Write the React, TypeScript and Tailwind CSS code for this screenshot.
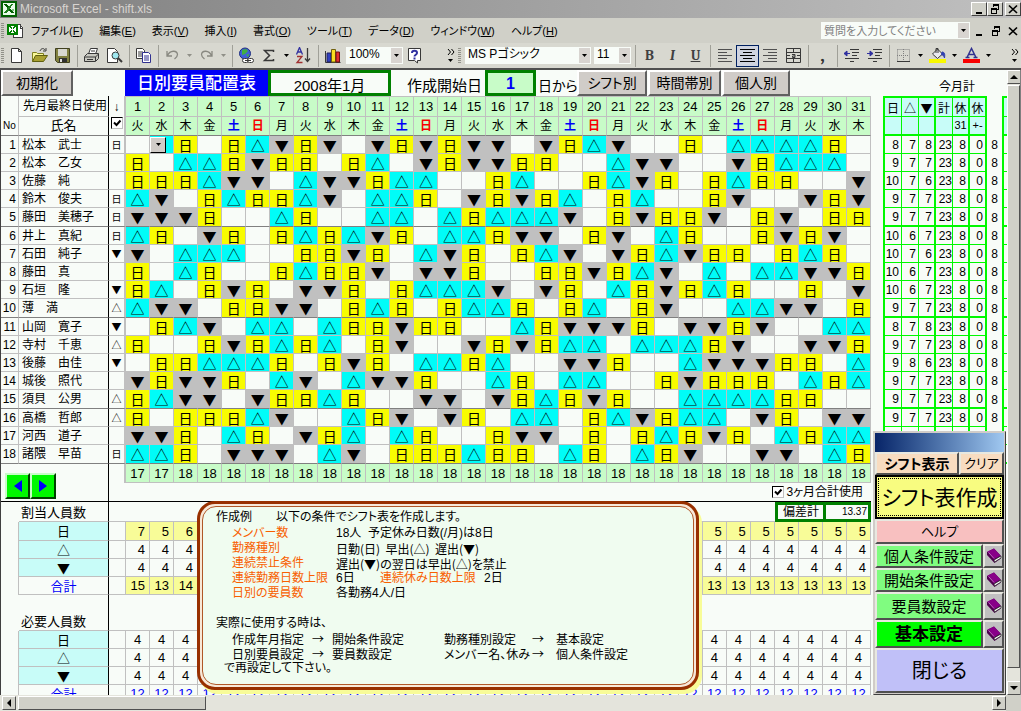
import type { ReactNode } from 'react';

// D = 日勤, U = 早出 (△), L = 遅出 (▼), . = 休み
const members = [
  { name: '松本　武士', prev: 'D', days: '.UD.DULDL.LDLDLL.LDUL..D.UUUUD.', sum: [8, 7, 8] },
  { name: '松本　乙女', prev: '.', days: 'D.UUDLDD.DU.LDLLDD..ULL..LDUUU.', sum: [9, 7, 7] },
  { name: '佐藤　純', prev: '.', days: 'DDDULL.ULLDUU..DU..DULD.DUDD..L', sum: [10, 7, 6] },
  { name: '鈴木　俊夫', prev: 'D', days: 'UL.DUDDUL.UUD.LDLDU.DU..DL..LDL', sum: [9, 7, 7] },
  { name: '藤田　美穂子', prev: 'D', days: 'LLLD..UD..UU.UDUUUL.DLDDL.DL.DD', sum: [9, 7, 7] },
  { name: '井上　真紀', prev: 'D', days: 'UD.LD.DUDULD.UUDLL.DL.UD..DLDL.', sum: [10, 6, 7] },
  { name: '石田　純子', prev: 'L', days: 'L.UUU..DDLD.ULD.DUL.LDULDD.DUD.', sum: [10, 7, 6] },
  { name: '藤田　真', prev: '.', days: 'D.UD..DUDDL.LLD..DDLDUL.U.UULLD', sum: [10, 6, 7] },
  { name: '石垣　隆', prev: 'L', days: 'DU.DLD.LLD.DUUUL.LD.UDLDUD..D.L', sum: [10, 6, 7] },
  { name: '薄　満', prev: 'U', days: 'ULL.DDLL.DUD.DUUD.DU.DL..UULL.D', sum: [9, 7, 7] },
  { name: '山岡　寛子', prev: 'L', days: '.DUL.UU.UDDLDD..UDLLLD.LLDL..UU', sum: [8, 7, 8] },
  { name: '寺村　千恵', prev: 'U', days: 'D..DLDUDU.DL..LDLDUU.UUUDL..LLD', sum: [9, 7, 7] },
  { name: '後藤　由佳', prev: 'L', days: '.DDUUUD.DLD.UUDU..LLD..ULLLDD.U', sum: [9, 8, 6] },
  { name: '城後　照代', prev: '.', days: 'LDLLD.UL.ULLD..UD.UU..DLDDD.UDU', sum: [9, 7, 7] },
  { name: '須貝　公男', prev: 'U', days: 'DULL.LDDUD..LL.LDUDLD..UUUUDD..', sum: [9, 7, 7] },
  { name: '高橋　哲郎', prev: 'U', days: 'D.DDDUL..UDL.LD.UU.DULDUU.LD.LL', sum: [9, 7, 7] },
  { name: '河西　道子', prev: '.', days: 'LLD.UD.LDU.UD..DLL.D.DUDLD.UDUU', sum: null },
  { name: '諸隈　早苗', prev: 'D', days: 'UUD.LLL.UL.DDDUDD.UD.UDL..LL.UD', sum: null },
];

const days = Array.from({ length: 31 }, (_, i) => i + 1);
const week = ['月', '火', '水', '木', '金', '土', '日'];
const marks: Record<string, string> = { D: '日', U: '△', L: '▼', '.': '' };
const fills: Record<string, string> = {
  D: 'bg-[#f8fc00]',
  U: 'bg-[#00fcf8]',
  L: 'bg-[#c0c0c0]',
  '.': 'bg-[#f8fcf8]',
};

const assigned = [
  { label: '日', head: [7, 5, 6], rest: 5, fill: 'bg-[#f8fc98]' },
  { label: '△', head: [4, 4, 4], rest: 4, fill: '' },
  { label: '▼', head: [4, 4, 4], rest: 4, fill: '' },
  { label: '合計', head: [15, 13, 14], rest: 13, fill: 'bg-[#f8fc98]' },
];
const required = [
  { label: '日', value: 4 },
  { label: '△', value: 4 },
  { label: '▼', value: 4 },
  { label: '合計', value: 12 },
];

const weekday = (d: number) => week[d % 7];
const weekColor = (w: string) =>
  w === '土' ? 'font-bold text-[#0000f8]' : w === '日' ? 'font-bold text-[#f80000]' : '';
// every fifth member closes a block with a darker rule
const isBlockEnd = (i: number) => i % 5 === 4 || i === members.length - 1;

const raised = 'border-2 border-t-white border-l-white border-r-[#606060] border-b-[#606060]';
// full-width △ and ▼
const markFont = "font-['Noto_Sans_CJK_JP',sans-serif]";

const Caret = ({ color = '#000' }: { color?: string }) => (
  <svg width="5" height="3" viewBox="0 0 5 3" className="shrink-0">
    <path d="M0 0h5L2.5 3z" fill={color} />
  </svg>
);

const MinIcon = () => (
  <svg width="10" height="10" viewBox="0 0 10 10" shapeRendering="crispEdges">
    <path d="M2 8h6v2H2z" />
  </svg>
);
const RestoreIcon = () => (
  <svg width="10" height="10" viewBox="0 0 10 10" shapeRendering="crispEdges">
    <path d="M3 0h6v6H7V5h1V2H4v1H3zM1 4h6v6H1zm1 2v3h4V6z" fillRule="evenodd" />
  </svg>
);
const CloseIcon = () => (
  <svg width="10" height="10" viewBox="0 0 10 10">
    <path d="M1 1.500l8 7.500M9 1.500l-8 7.500" stroke="#000" strokeWidth="1.700" />
  </svg>
);

const ExcelIcon = ({ size = 16 }: { size?: number }) => (
  <svg width={size} height={size} viewBox="0 0 16 16" shapeRendering="crispEdges">
    <path d="M0 0h16v16H0z" fill="#006000" />
    <path d="M2 2h12v12H2z" fill="#e8fce8" />
    <path d="M3 3h3l7 9h-3z" fill="#006000" />
    <path d="M12 3h-2l-7 9h3z" fill="#208020" />
    <path d="M11 8h2v2h-2z" fill="#80c080" />
  </svg>
);

const WorkbookIcon = () => (
  <svg width="17" height="16" viewBox="0 0 17 16" shapeRendering="crispEdges">
    <path d="M6.500 1.500h6l3 3v10h-9z" fill="#fff" stroke="#404040" />
    <path d="M13 1v4h3" fill="none" stroke="#404040" />
    <path d="M0 1h11v11H0z" fill="#008000" />
    <path d="M2 3h7v7H2z" fill="#fff" />
    <path d="M2 3h2l5 7H7zM9 3H7l-5 7h2z" fill="#008000" />
  </svg>
);

const Ico = ({ children }: { children: ReactNode }) => (
  <svg width="17" height="17" viewBox="0 0 17 17" fill="none" stroke="#383838">
    {children}
  </svg>
);

const NewIcon = () => <Ico><path d="M3.500 1.500h7l3 3v11h-10zM10.500 1.500v3h3" fill="#fff" /></Ico>;
const OpenIcon = () => (
  <Ico>
    <path d="M1.500 14.500v-9h4l1 1h6v2" fill="#f8f898" stroke="#808020" />
    <path d="M1.500 14.500l3-6h12l-4 6z" fill="#a8a030" stroke="#606010" />
    <path d="M9 4c1-3 4-3 5-1m1-2v3h-3" />
  </Ico>
);
const SaveIcon = () => (
  <Ico>
    <path d="M1.500 1.500h14v14h-12l-2-2z" fill="#808040" stroke="#404020" />
    <path d="M4 2h9v7H4z" fill="#d8d8d0" stroke="none" />
    <path d="M5 11h8v4H5z" fill="#303030" stroke="none" />
    <path d="M6 12h2v3H6z" fill="#e0e0e0" stroke="none" />
  </Ico>
);
const PrintIcon = () => (
  <Ico>
    <path d="M5.500 7l2-5.500h7L12.500 7z" fill="#fff" />
    <path d="M1.500 9.500l3-3h11v5l-3 3h-11z" fill="#c8c8c0" />
    <path d="M2 10h10.500v4M12.500 10l3-3M4 12.500h6M8 4h4" />
  </Ico>
);
const PreviewIcon = () => (
  <Ico>
    <path d="M1.500 1.500h7l3 3v11h-10z" fill="#fff" />
    <circle cx="9.500" cy="8.500" r="3.500" fill="#a0e8f0" />
    <path d="M12 11l4 4" strokeWidth="2" />
  </Ico>
);
const CopyIcon = () => (
  <Ico>
    <path d="M1.500 1.500h6l2 2v8h-8z" fill="#fff" />
    <path d="M3 5h5M3 7h5M3 9h5" />
    <path d="M7.500 5.500h6l2 2v8h-8z" fill="#fff" stroke="#303090" />
    <path d="M9 9h5M9 11h5M9 13h5" stroke="#303090" />
  </Ico>
);
const UndoIcon = () => <Ico><path d="M3 4v5h5M3.500 8.500C6 3 13 3 13.500 7.500c0 2-1 3-3 4.500" stroke="#888880" strokeWidth="1.300" /></Ico>;
const RedoIcon = () => <Ico><path d="M14 4v5H9M13.500 8.500C11 3 4 3 3.500 7.500c0 2 1 3 3 4.500" stroke="#888880" strokeWidth="1.300" /></Ico>;
const LinkIcon = () => (
  <Ico>
    <circle cx="7" cy="6.500" r="5.500" fill="#4060d8" stroke="#203080" />
    <path d="M4 3l4-1 2 2-3 3-3 1zM8 8l3-1-1 3z" fill="#40b040" stroke="none" />
    <rect x="4.500" y="11.500" width="6" height="4" rx="2" fill="#fff" />
    <rect x="9.500" y="11.500" width="6" height="4" rx="2" fill="#fff" />
    <path d="M7 13.500h6" />
  </Ico>
);
const SigmaIcon = () => <Ico><path d="M12.500 5V3.500h-9l5 5-5 5h9V12" strokeWidth="1.500" /></Ico>;
const SortIcon = () => (
  <Ico>
    <path d="M1.500 7.500l3-7 3 7M2.500 5h4" stroke="#3030a0" strokeWidth="1.300" />
    <path d="M2 9.500h5l-5 6h5.500" stroke="#a03030" strokeWidth="1.300" />
    <path d="M12.500 1v13M10 11.500l2.500 3 2.500-3" strokeWidth="1.300" />
  </Ico>
);
const ChartIcon = () => (
  <Ico>
    <path d="M1.500 4v11.500h15" />
    <path d="M3 6h4v9H3z" fill="#3040c0" stroke="#202060" />
    <path d="M7.500 2.500h4V15h-4z" fill="#f8e020" stroke="#706010" />
    <path d="M12 5h3.500v10H12z" fill="#e03030" stroke="#701010" />
  </Ico>
);
const HelpIcon = () => (
  <Ico>
    <path d="M2.500 1.500h12v12h-3v2.500l-3-2.500h-6z" fill="#fff" />
    <path d="M6 6c0-3 5-3 5 0 0 1.500-2.500 2-2.500 3.500M8.500 10.500v2" stroke="#3030a0" strokeWidth="2" />
  </Ico>
);
const LinesIcon = ({ d, color = '#505050' }: { d: string; color?: string }) => (
  <Ico><path d={d} stroke={color} /></Ico>
);
const MergeIcon = () => (
  <Ico>
    <path d="M1.500 1.500h14v14h-14zM1 5.500h15M1 11.500h15M8.500 1v4M8.500 12v4" />
    <path d="M2 8.500h3M12 8.500h3M7 7.500h3v3H7.500V9H10" />
  </Ico>
);
const IndentIcon = ({ arrow }: { arrow: string }) => (
  <Ico>
    <path d="M7 2.500h9M9 5.500h7M9 8.500h5M2 11.500h14M7 14.500h4" />
    <path d={arrow} fill="#3030a0" stroke="#3030a0" />
  </Ico>
);
const BordersIcon = () => (
  <Ico>
    <path d="M2.500 2.500h12v12M2.500 2.500v12M8.500 2v12M2 8.500h12" strokeDasharray="1 1" stroke="#808080" />
    <path d="M2 14.500h13" />
  </Ico>
);
const FillIcon = () => (
  <Ico>
    <path d="M3.500 7l5-5 5 5-5 4.500z" fill="#e8e8f0" />
    <path d="M7 6V1.500h2V6" />
    <path d="M13 5c3 0 3 3 2.500 6-1-3-2-3-3-3z" fill="#3040b0" stroke="#3040b0" />
    <path d="M0 12h17v4H0z" fill="#f8f800" stroke="none" />
  </Ico>
);
const FontColorIcon = () => (
  <Ico>
    <path d="M4 10.500l4.500-9 4.500 9M6 7.500h5M2.500 10.500h4M10.500 10.500h4" stroke="#303090" strokeWidth="1.500" />
    <path d="M0 12h17v4H0z" fill="#f80000" stroke="none" />
  </Ico>
);
const BookIcon = () => (
  <svg width="16" height="16" viewBox="0 0 16 16">
    <path d="M1 4l7-3.500 7 7.500v2.500L8.500 15 1 7z" fill="#500050" />
    <path d="M1.500 3.500L8 .5l6.500 7L8 11z" fill="#880088" />
    <path d="M8 12l7-4v2l-6.500 4z" fill="#fff" stroke="#202020" strokeWidth=".7" />
    <path d="M2.500 4.500l5.500 6" stroke="#d080d0" strokeWidth=".8" />
  </svg>
);

const Tool = ({ label, children }: { label: string; children: ReactNode }) => (
  <button type="button" aria-label={label} className="flex h-[22px] w-[23px] shrink-0 items-center justify-center">
    {children}
  </button>
);
const Drop = ({ label, color }: { label: string; color?: string }) => (
  <button type="button" aria-label={label} className="flex h-[22px] w-[11px] shrink-0 items-center justify-center">
    <Caret color={color} />
  </button>
);
const Sep = () => (
  <div className="flex w-[6px] shrink-0 justify-center">
    <div className="h-[22px] w-px bg-[#a0a098]" />
  </div>
);
const Grip = () => (
  <div className="flex w-[5px] shrink-0 flex-col items-center gap-px">
    {[0, 1, 2, 3, 4, 5, 6, 7].map(i => <div key={i} className="h-px w-[3px] bg-[#909088]" />)}
  </div>
);
const More = () => (
  <button type="button" aria-label="ツールバー オプション" className="flex w-[13px] shrink-0 flex-col items-center gap-1">
    <svg width="8" height="6" viewBox="0 0 8 6"><path d="M1 0l2.500 3L1 6M4.500 0L7 3 4.500 6" fill="none" stroke="#000" /></svg>
    <Caret />
  </button>
);

const Combo = ({ label, value, className }: { label: string; value: string; className: string }) => (
  <div className={`relative h-[17px] shrink-0 bg-[#f8fcf8] ${className}`}>
    <select aria-label={label} className="block h-[15px] w-full appearance-none pl-[3px] text-[12px] leading-[15px] outline-none">
      <option>{value}</option>
    </select>
    <span className="pointer-events-none absolute inset-y-px right-px flex w-[11px] items-center justify-center bg-[#d8d4d0]">
      <Caret />
    </span>
  </div>
);

const Check = ({ id, label }: { id: string; label?: string }) => (
  <span className="relative inline-block h-[12px] w-[12px]">
    <input
      id={id}
      type="checkbox"
      defaultChecked
      aria-label={label}
      className="block h-[12px] w-[12px] appearance-none border border-r-[#c0c0c0] border-b-[#c0c0c0] border-t-black border-l-black bg-white"
    />
    <svg width="12" height="12" viewBox="0 0 12 12" className="pointer-events-none absolute inset-0">
      <path d="M3 5.500l2.500 2.500L9.500 3.500" fill="none" stroke="#000" strokeWidth="2" />
    </svg>
  </span>
);

const menus = [
  ['ファイル', 'F'], ['編集', 'E'], ['表示', 'V'], ['挿入', 'I'], ['書式', 'O'],
  ['ツール', 'T'], ['データ', 'D'], ['ウィンドウ', 'W'], ['ヘルプ', 'H'],
];

const titleButton =
  'flex h-[14px] w-[16px] items-center justify-center border border-t-white border-l-white border-r-[#404040] border-b-[#404040] bg-[#d0d0c8]';

const TitleBar = () => (
  <header className="flex h-[18px] shrink-0 items-center bg-linear-to-r from-[#808080] to-[#c0c0c0] pl-px">
    <ExcelIcon />
    <h1 className="ml-[3px] flex-1 text-[12px] leading-[18px] text-[#d8d4d0]">Microsoft Excel - shift.xls</h1>
    <div className="flex">
      <button type="button" aria-label="最小化" className={titleButton}><MinIcon /></button>
      <button type="button" aria-label="元に戻す" className={titleButton}><RestoreIcon /></button>
      <button type="button" aria-label="閉じる" className={`ml-[2px] ${titleButton}`}><CloseIcon /></button>
    </div>
  </header>
);

const MenuBar = () => (
  <nav className="flex h-[25px] shrink-0 items-center bg-[#d0d0c8]">
    <Grip />
    <span className="ml-[2px]"><WorkbookIcon /></span>
    <div className="ml-[7px] flex flex-1 gap-4 text-[11px] leading-[16px]">
      {menus.map(([text, key]) => (
        <button type="button" key={key} className="whitespace-nowrap">
          {text}(<u>{key}</u>)
        </button>
      ))}
    </div>
    <div className="flex h-[17px] w-[149px] items-center bg-[#f8fcf8]">
      <input aria-label="質問" placeholder="質問を入力してください" className="h-full min-w-0 flex-1 pl-[3px] text-[11px] outline-none placeholder:text-[#808080]" />
      <button type="button" aria-label="質問の一覧" className="mr-px flex h-[15px] w-[11px] items-center justify-center bg-[#d8d4d0]"><Caret /></button>
    </div>
    <div className="flex w-[51px] justify-between pr-[3px] pl-[4px]">
      <button type="button" aria-label="ブックを最小化"><MinIcon /></button>
      <button type="button" aria-label="ブックを元に戻す"><RestoreIcon /></button>
      <button type="button" aria-label="ブックを閉じる"><CloseIcon /></button>
    </div>
  </nav>
);

const Toolbar = () => (
  <div className="flex h-[25px] shrink-0 items-center bg-[#d8d8d0]">
    <div className="flex w-[457px] shrink-0 items-center">
      <Grip />
      <Tool label="新規作成"><NewIcon /></Tool>
      <Tool label="開く"><OpenIcon /></Tool>
      <Tool label="上書き保存"><SaveIcon /></Tool>
      <Sep />
      <Tool label="印刷"><PrintIcon /></Tool>
      <Tool label="印刷プレビュー"><PreviewIcon /></Tool>
      <Sep />
      <Tool label="コピー"><CopyIcon /></Tool>
      <Sep />
      <Tool label="元に戻す"><UndoIcon /></Tool>
      <Drop label="元に戻す履歴" color="#909088" />
      <Tool label="やり直し"><RedoIcon /></Tool>
      <Drop label="やり直し履歴" color="#909088" />
      <Sep />
      <Tool label="ハイパーリンク"><LinkIcon /></Tool>
      <Tool label="オートSUM"><SigmaIcon /></Tool>
      <Drop label="関数" />
      <Tool label="並べ替え"><SortIcon /></Tool>
      <Sep />
      <Tool label="グラフ"><ChartIcon /></Tool>
      <Combo label="ズーム" value="100%" className="ml-[2px] w-[57px]" />
      <Tool label="ヘルプ"><HelpIcon /></Tool>
      <div className="flex-1" />
      <More />
    </div>
    <div className="flex flex-1 items-center">
      <Grip />
      <Combo label="フォント" value="MS Pゴシック" className="ml-[3px] w-[126px]" />
      <Combo label="フォント サイズ" value="11" className="ml-[3px] mr-px w-[37px]" />
      <Sep />
      <Tool label="太字"><b className="font-serif text-[14px] text-[#404040]">B</b></Tool>
      <Tool label="斜体"><i className="font-serif text-[14px] font-bold text-[#404040]">I</i></Tool>
      <Tool label="下線"><u className="font-serif text-[14px] font-bold text-[#404040]">U</u></Tool>
      <Sep />
      <Tool label="左揃え"><LinesIcon d="M2 2.500h14M2 5.500h9M2 8.500h14M2 11.500h9M2 14.500h14" /></Tool>
      <span className="border border-[#002060] bg-[#d0d4e0]">
        <button type="button" aria-label="中央揃え" className="flex h-[20px] w-[21px] items-center justify-center">
          <LinesIcon d="M1 2.500h15M4 5.500h9M1 8.500h15M4 11.500h9M1 14.500h15" color="#000" />
        </button>
      </span>
      <Tool label="右揃え"><LinesIcon d="M1 2.500h14M6 5.500h9M1 8.500h14M6 11.500h9M1 14.500h14" /></Tool>
      <Tool label="セルを結合して中央揃え"><MergeIcon /></Tool>
      <Sep />
      <Tool label="桁区切り"><b className="font-serif text-[20px] leading-[12px] text-[#303030]">,</b></Tool>
      <Sep />
      <Tool label="インデント解除"><IndentIcon arrow="M1 6.500h6M4 4v5l-3-2.500z" /></Tool>
      <Tool label="インデント"><IndentIcon arrow="M1 6.500h6M4 4v5l3-2.500z" /></Tool>
      <Sep />
      <Tool label="罫線"><BordersIcon /></Tool>
      <Drop label="罫線の種類" />
      <Tool label="塗りつぶし"><FillIcon /></Tool>
      <Drop label="塗りつぶしの色" />
      <Tool label="フォントの色"><FontColorIcon /></Tool>
      <Drop label="フォントの色の一覧" />
      <div className="flex-1" />
      <More />
    </div>
  </div>
);

const SheetButton = ({ children, className }: { children: ReactNode; className: string }) => (
  <button type="button" className={`h-[26px] shrink-0 bg-[#d0ccc8] text-[14px] leading-[22px] whitespace-nowrap ${raised} ${className}`}>{children}</button>
);

const SheetHead = () => (
  <div className="flex h-[26px]">
    <SheetButton className="w-[72px]">初期化</SheetButton>
    <h2 className="ml-[52px] w-[143px] bg-[#0000f8] text-center text-[17px] leading-[27px] font-medium text-white">日別要員配置表</h2>
    <div className="w-[123px] border-[3px] border-[#008000] text-center text-[15px] leading-[26px]">2008年1月</div>
    <div className="w-[94px] pr-[3px] text-right text-[15px] leading-[32px]">作成開始日</div>
    <div className="w-[51px] border-[3px] border-[#008000] bg-[#c8fcc8] text-center text-[16px] leading-[22px] font-bold text-[#0000f8]">1</div>
    <div className="w-[41px] pl-[2px] text-[14px] leading-[32px] whitespace-nowrap">日から</div>
    <SheetButton className="w-[70px]">シフト別</SheetButton>
    <SheetButton className="ml-px w-[73px]">時間帯別</SheetButton>
    <SheetButton className="ml-px w-[68px]">個人別</SheetButton>
  </div>
);

const ScheduleTable = () => (
  <table className="w-full table-fixed border-separate border-spacing-0 text-[13px] leading-[16px]">
    <colgroup>
      <col className="w-[18px]" />
      <col className="w-[90px]" />
      <col className="w-[17px]" />
      {days.map(d => <col key={d} />)}
    </colgroup>
    <thead>
      <tr className="h-[21px]">
        <th rowSpan={2} className="border-r border-b border-r-[#c0c0c0] border-b-[#808080] p-0 pb-px align-bottom text-[10px] font-normal">No</th>
        <th className="border-r border-b border-r-black border-b-[#c0c0c0] p-0 pr-px text-right text-[12px] font-normal whitespace-nowrap">先月最終日使用</th>
        <th className="border-r-2 border-[#c0c0c0] p-0 text-[12px] font-normal">↓</th>
        {days.map(d => (
          <th key={d} className="border-t border-r border-b border-[#c0c0c0] bg-[#c8fcc8] p-0 pt-px font-normal">{d}</th>
        ))}
      </tr>
      <tr className="h-[19px]">
        <th className="border-r border-b border-r-black border-b-[#808080] p-0 text-[13px] font-normal">氏名</th>
        <th className="border-r-2 border-b border-r-[#c0c0c0] border-b-[#808080] p-0 align-top leading-[12px]">
          <Check id="use-prev" label="先月最終日使用" />
        </th>
        {days.map(d => (
          <th key={d} className={`border-r border-b border-r-[#c0c0c0] border-b-[#808080] bg-[#c8fcc8] p-0 text-[12px] ${weekColor(weekday(d)) || 'font-normal'}`}>
            {weekday(d)}
          </th>
        ))}
      </tr>
    </thead>
    <tbody>
      {members.map((m, i) => {
        const line = isBlockEnd(i) ? 'border-b-[#808080]' : 'border-b-[#c0c0c0]';
        return (
          <tr key={m.name} className={isBlockEnd(i) ? 'h-[19px]' : 'h-[18px]'}>
            <td className={`border-r border-b border-r-[#c0c0c0] p-0 pr-[2px] text-right text-[12px] ${line}`}>{i + 1}</td>
            <td className={`border-r border-b border-r-black p-0 pl-[3px] text-[12px] whitespace-nowrap ${line}`}>{m.name}</td>
            <td className={`border-r-2 border-b border-r-[#c0c0c0] p-0 text-center text-[10px] ${markFont} ${line}`}>{marks[m.prev]}</td>
            {m.days.split('').map((s, d) => (
              <td key={d} className={`border-r border-b border-r-[#c0c0c0] p-0 text-center text-[14px] ${markFont} ${line} ${fills[s]}`}>
                {i === 0 && d === 1 ? (
                  <button type="button" aria-label="シフトを選択" className="flex h-[16px] w-[16px] items-center justify-center border border-t-white border-l-white border-r-black border-b-black bg-[#d0ccc8]">
                    <Caret />
                  </button>
                ) : marks[s]}
              </td>
            ))}
          </tr>
        );
      })}
      <tr className="h-[19px]">
        <td colSpan={2} rowSpan={2} className="border-r border-b border-black p-0 pt-[9px] pl-[4px] align-top">
          <div className="flex">
            <button type="button" aria-label="前月" className="flex h-[26px] w-[25px] items-center justify-center border-2 border-t-[#c8fcc8] border-l-[#c8fcc8] border-r-[#004000] border-b-[#004000] bg-[#00f800]">
              <svg width="8" height="12" viewBox="0 0 8 12"><path d="M8 0v12L0 6z" fill="#0000f8" /></svg>
            </button>
            <button type="button" aria-label="翌月" className="flex h-[26px] w-[26px] items-center justify-center border-2 border-t-[#c8fcc8] border-l-[#c8fcc8] border-r-[#004000] border-b-[#004000] bg-[#00f800]">
              <svg width="8" height="12" viewBox="0 0 8 12"><path d="M0 0v12l8-6z" fill="#0000f8" /></svg>
            </button>
          </div>
        </td>
        <td className="border-r-2 border-[#c0c0c0] p-0" />
        {days.map(d => (
          <td key={d} className="border-r border-b border-[#c0c0c0] bg-[#c8fcc8] p-0 pt-[2px] text-center">{d < 3 ? 17 : 18}</td>
        ))}
      </tr>
      <tr className="h-[19px]">
        <td colSpan={32} className="border-b border-black p-0">
          <div className="flex h-[18px] items-center justify-end gap-[3px] pr-[8px] text-[12px]">
            <Check id="three-months" />
            <label htmlFor="three-months">3ヶ月合計使用</label>
          </div>
        </td>
      </tr>
      <tr className="h-[20px]">
        <td className="p-0" />
        <td className="border-r border-b border-r-black border-b-[#c0c0c0] p-0 pt-[3px] pl-[2px]">割当人員数</td>
        <td colSpan={28} className="border-b border-[#c0c0c0] p-0" />
        <td colSpan={2} className="border-[3px] border-r-0 border-[#008000] p-0 pr-[4px] text-right text-[12px] leading-[14px] whitespace-nowrap">偏差計</td>
        <td colSpan={2} className="border-[3px] border-[#008000] p-0 pr-px text-right text-[10px] leading-[14px]">13.37</td>
      </tr>
      {assigned.map((row, i) => (
        <tr key={row.label} className={i === 0 ? 'h-[19px]' : 'h-[18px]'}>
          <td className="border-r border-[#c0c0c0] p-0" />
          <td className={`border-r border-b border-r-black border-b-[#c0c0c0] p-0 text-center text-[13px] ${markFont} ${i === 3 ? 'text-[#0000f8]' : 'bg-[#c8fcf8]'}`}>{row.label}</td>
          <td className="border-r border-b border-[#c0c0c0] p-0" />
          {days.map((d, n) => (
            <td key={d} className={`border-r border-b border-[#c0c0c0] p-0 pt-px pr-[4px] text-right ${row.fill}`}>{row.head[n] ?? row.rest}</td>
          ))}
        </tr>
      ))}
      <tr className="h-[36px]">
        <td className="p-0" />
        <td className="border-r border-b border-r-black border-b-[#c0c0c0] p-0 pl-[2px] align-bottom">必要人員数</td>
        <td colSpan={32} className="border-b border-[#c0c0c0] p-0" />
      </tr>
      {required.map((row, i) => (
        <tr key={row.label} className="h-[18px]">
          <td className="border-r border-[#c0c0c0] p-0" />
          <td className={`border-r border-b border-r-black border-b-[#c0c0c0] p-0 text-center text-[13px] ${markFont} ${i === 3 ? 'text-[#0000f8]' : 'bg-[#c8fcf8]'}`}>{row.label}</td>
          <td className="border-r border-b border-[#c0c0c0] p-0" />
          {days.map(d => (
            <td key={d} className={`border-r border-b border-[#c0c0c0] p-0 pt-px text-center ${i === 3 ? 'text-[#0000f8]' : ''}`}>{row.value}</td>
          ))}
        </tr>
      ))}
    </tbody>
  </table>
);

// columns 3, 5 and 6 carry the heavy green rule
const sumRule = ['border-r', 'border-r', 'border-r-2', 'border-r', 'border-r-2', 'border-r-2'];

const SummaryTable = () => (
  <div className="w-[136px] shrink-0 overflow-hidden pl-[12px]">
    <div className="h-[26px] pl-[56px] text-[12px] leading-[34px] whitespace-nowrap">今月計</div>
    <table className="w-[124px] table-fixed border-separate border-spacing-0 text-[12px] leading-[15px]">
      <colgroup>
        <col className="w-[19px]" />
        <col className="w-[17px]" />
        <col className="w-[17px]" />
        <col className="w-[17px]" />
        <col className="w-[17px]" />
        <col className="w-[17px]" />
        <col className="w-[15px]" />
        <col />
      </colgroup>
      <thead>
        <tr className="h-[21px]">
          {['日', '△', '▼', '計', '休', '休'].map((h, i) => (
            <th key={i} className={`border-t-2 border-b border-[#00f800] bg-[#c8fcf8] p-0 font-normal ${markFont} ${sumRule[i]} ${i === 0 ? 'border-l-2' : ''}`}>{h}</th>
          ))}
          <th className="p-0" />
          <th className="border-t-2 border-b border-l-2 border-[#00f800] bg-[#c8fcf8] p-0" />
        </tr>
        <tr className="h-[19px]">
          {['', '', '', '', '31', '+-'].map((h, i) => (
            <th key={i} className={`border-b-2 border-[#00f800] bg-[#c8fcf8] p-0 text-[11px] font-normal ${sumRule[i]} ${i === 0 ? 'border-l-2' : ''}`}>{h}</th>
          ))}
          <th className="p-0" />
          <th className="border-b-2 border-l-2 border-[#00f800] bg-[#c8fcf8] p-0" />
        </tr>
      </thead>
      <tbody>
        {members.map((m, i) => {
          const cells = m.sum ? [...m.sum, 23, 8, 0] : ['', '', '', '', '', ''];
          const line = isBlockEnd(i) ? 'border-b-2' : 'border-b';
          return (
            <tr key={m.name} className={isBlockEnd(i) ? 'h-[19px]' : 'h-[18px]'}>
              {cells.map((c, n) => (
                <td key={n} className={`border-[#00f800] p-0 pt-px text-right ${n === 3 ? '' : 'pr-[2px]'} ${line} ${sumRule[n]} ${n === 0 ? 'border-l-2' : ''}`}>{c}</td>
              ))}
              <td className="p-0 pt-px text-center">{m.sum ? 8 : ''}</td>
              <td className={`border-l-2 border-[#00f800] p-0 ${line}`} />
            </tr>
          );
        })}
      </tbody>
    </table>
  </div>
);

const Term = ({ children }: { children: ReactNode }) => <dt className="w-[104px] shrink-0 whitespace-nowrap text-[#f86000]">{children}</dt>;

const ExampleNote = () => (
  <aside className="absolute top-[431px] left-[196px] w-[502px] rounded-[18px] border-[3px] border-[#983000] bg-[#f8e8d8] p-[2px] shadow-[3px_4px_0_#f8fc98]">
    <div className="h-[179px] rounded-[14px] border border-[#b05828] bg-[#f0fcf0] pt-[3px] pl-[13px] text-[12px] leading-[15px] whitespace-nowrap">
      <p className="flex h-4"><span className="w-[60px]">作成例</span>以下の条件でシフト表を作成します。</p>
      <dl className="pl-4">
        <div className="flex"><Term>メンバー数</Term><dd>18人&nbsp; 予定休み日数(/月)は8日</dd></div>
        <div className="flex"><Term>勤務種別</Term><dd className={markFont}>日勤(日)&nbsp; 早出(△)&nbsp; 遅出(▼)</dd></div>
        <div className="flex"><Term>連続禁止条件</Term><dd className={markFont}>遅出(▼)の翌日は早出(△)を禁止</dd></div>
        <div className="flex">
          <Term>連続勤務日数上限</Term><dd className="w-[44px]">6日</dd>
          <Term>連続休み日数上限</Term><dd>2日</dd>
        </div>
        <div className="flex"><Term>日別の要員数</Term><dd>各勤務4人/日</dd></div>
      </dl>
      <p className="mt-[15px]">実際に使用する時は、</p>
      <div className={`grid grid-cols-[80px_20px_112px_88px_24px_1fr] pl-4 ${markFont}`}>
        <span>作成年月指定</span><span>→</span><span>開始条件設定</span>
        <span>勤務種別設定</span><span>→</span><span>基本設定</span>
        <span>日別要員設定</span><span>→</span><span>要員数設定</span>
        <span>メンバー名、休み</span><span>→</span><span>個人条件設定</span>
      </div>
      <p className="pl-2">で再設定して下さい。</p>
    </div>
  </aside>
);

const settings = [
  { label: '個人条件設定', style: 'bg-[#80fc80] text-[15px]', height: 'h-[24px]' },
  { label: '開始条件設定', style: 'bg-[#80fc80] text-[15px]', height: 'h-[24px]' },
  { label: '要員数設定', style: 'bg-[#80fc80] text-[15px]', height: 'h-[28px]' },
  { label: '基本設定', style: 'bg-[#00fc00] text-[17px] font-bold', height: 'h-[28px]' },
];

const bevel = 'border-2 border-t-[#e8e8e0] border-l-[#e8e8e0] border-r-[#505050] border-b-[#505050]';

const ToolWindow = () => (
  <section aria-label="シフト操作" className="absolute top-[361px] right-[14px] w-[133px] border border-r-[#404040] border-b-[#404040] border-t-[#d0ccc8] border-l-[#d0ccc8] bg-[#d0ccc8] p-px leading-none">
    <div className="h-[19px] bg-linear-to-r from-[#082468] to-[#a0c8f0]" />
    <div className="flex h-[23px]">
      <button type="button" className={`w-[84px] bg-[#f8dcc0] text-[14px] font-bold whitespace-nowrap ${bevel}`}>シフト表示</button>
      <button type="button" className={`flex-1 bg-[#f8dcc0] text-[13px] whitespace-nowrap ${bevel}`}>クリア</button>
    </div>
    <button type="button" className="block h-[44px] w-full border-2 border-black bg-[#f8fc80] p-px">
      <span className="flex h-full items-center justify-center border border-dotted border-black text-[21px] whitespace-nowrap">シフト表作成</span>
    </button>
    <button type="button" className={`block h-[25px] w-full bg-[#f8c0c0] text-[13px] ${bevel}`}>ヘルプ</button>
    {settings.map(s => (
      <div key={s.label} className={`flex ${s.height}`}>
        <button type="button" className={`flex-1 whitespace-nowrap ${bevel} ${s.style}`}>{s.label}</button>
        <button type="button" aria-label={`${s.label}の説明`} className={`flex w-[21px] items-center justify-center bg-[#c0c0c0] ${bevel}`}><BookIcon /></button>
      </div>
    ))}
    <button type="button" className={`block h-[45px] w-full bg-[#c0c0f8] text-[20px] ${bevel}`}>閉じる</button>
  </section>
);

const ScrollButton = ({ label, d }: { label: string; d: string }) => (
  <button type="button" aria-label={label} className="flex h-[14px] w-[14px] shrink-0 items-center justify-center border border-t-white border-l-white border-r-[#505050] border-b-[#505050] bg-[#d0d0c8]">
    <svg width="8" height="8" viewBox="0 0 8 8"><path d={d} /></svg>
  </button>
);

export default function App() {
  return (
    <div className="flex h-screen flex-col overflow-hidden bg-[#d0d0c8] font-['Liberation_Sans','Noto_Sans_CJK_JP',sans-serif] text-black [font-feature-settings:'palt']">
      <TitleBar />
      <MenuBar />
      <Toolbar />
      <div className="h-[2px] shrink-0 bg-[#505050]" />

      <main className="relative flex min-h-0 flex-1 overflow-hidden border-r border-l border-r-[#808080] border-l-[#404040] bg-[#f8fcf8]">
        <div className="min-w-0 flex-1">
          <SheetHead />
          <ScheduleTable />
        </div>
        <SummaryTable />
        <div className="flex w-[13px] shrink-0 flex-col bg-[#e4e4dc]">
          <ScrollButton label="上へスクロール" d="M0 6h8L4 2z" />
          <div className="my-px flex-1 border border-t-white border-l-white border-r-[#505050] border-b-[#505050] bg-[#d0d0c8]" />
          <div className="h-[12px]" />
          <ScrollButton label="下へスクロール" d="M0 2h8L4 6z" />
        </div>
        <ExampleNote />
        <ToolWindow />
      </main>

      <div className="flex h-4 shrink-0 items-center bg-[#e4e4dc] pl-[2px]">
        <ScrollButton label="左へスクロール" d="M6 0v8L2 4z" />
        <div className="ml-[2px] h-[14px] w-[188px] border border-t-white border-l-white border-r-[#505050] border-b-[#505050] bg-[#d0d0c8]" />
        <div className="flex-1" />
        <ScrollButton label="右へスクロール" d="M2 0v8l4-4z" />
        <div className="h-full w-[15px] bg-[#d0d0c8]" />
      </div>
    </div>
  );
}
